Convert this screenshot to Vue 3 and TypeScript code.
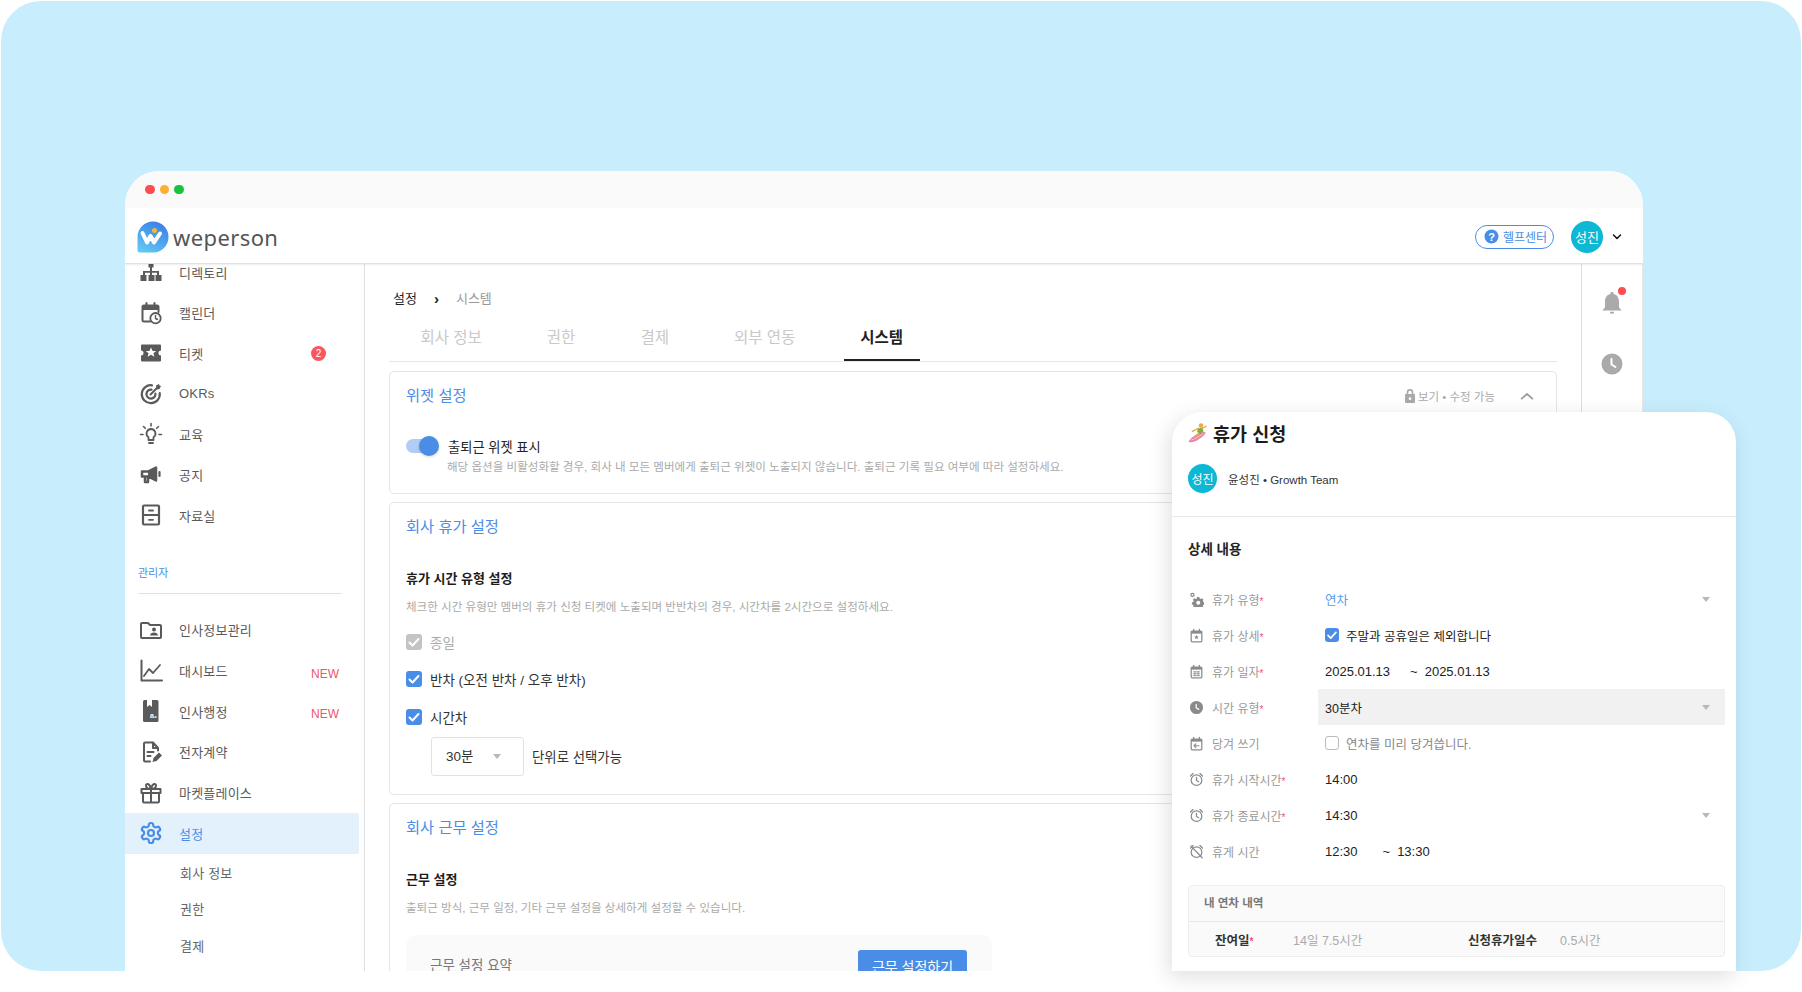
<script setup lang="ts">
import { h } from 'vue'

interface Shape { d: string; fill?: string; stroke?: string; w?: number }
type IconName = string

const s = (d: string, w = 2): Shape => ({ d, stroke: 'currentColor', w })
const f = (d: string, fill = 'currentColor'): Shape => ({ d, fill })

const icons: Record<IconName, Shape[]> = {
  org: [f('M9.500 1h5v6.500h-1.500V11H20v4h2.500v6h-6v-6H18v-2.200h-5V15h2.500v6h-6v-6H11v-2.200H6V15h1.500v6h-6v-6H4v-4h7V7.500H9.500z')],
  cal: [
    s('M11 20.500H5A1.500 1.500 0 0 1 3.500 19V6A1.500 1.500 0 0 1 5 4.500h13A1.500 1.500 0 0 1 19.500 6V11'),
    f('M3.500 4.500h16v4.500h-16z'),
    s('M7.500 2V6M15.500 2V6'),
    s('M16.500 12a5.200 5.200 0 1 0 0 10.400 5.200 5.200 0 0 0 0-10.400z', 1.8),
    s('M16.500 14.500v3l2 1', 1.4),
  ],
  ticket: [
    f('M3 3.500h18a1 1 0 0 1 1 1v5a2.500 2.500 0 0 0 0 5v5a1 1 0 0 1-1 1H3a1 1 0 0 1-1-1v-5a2.500 2.500 0 0 0 0-5v-5a1 1 0 0 1 1-1z'),
    f('M12 6.500l1.600 3.400h3.600l-2.800 2.300 1 3.600-3.400-2-3.400 2 1-3.600-2.800-2.300h3.600z', '#fff'),
  ],
  okr: [
    s('M13 3.300A9 9 0 1 0 20.700 11', 2.2),
    s('M12.500 7.600a4.500 4.500 0 1 0 3.900 3.900', 2.2),
    s('M11.500 12.500L18 6', 2),
    f('M17 3.500l3-1.500.5 1.500L22 4l-1.500 3-3 .5z'),
  ],
  bulb: [
    s('M12 7a4.500 4.500 0 0 0-2.500 8.200V18h5v-2.800A4.500 4.500 0 0 0 12 7z', 1.8),
    s('M10 21h4', 1.8),
    s('M12 1.500V4M4.500 4.500l1.800 1.800M19.500 4.500l-1.800 1.800M1.500 12.500H4M20 12.500h2.500', 1.6),
  ],
  mega: [s('M3 8.500h6l8-4v13l-8-4H3zM6 14v5h3v-5', 2.5), f('M9 8.500l8-4v13l-8-4z'), s('M20.500 9v4', 2.2)],
  cabinet: [s('M5 2.500h14a1 1 0 0 1 1 1v17a1 1 0 0 1-1 1H5a1 1 0 0 1-1-1v-17a1 1 0 0 1 1-1zM4 12h16', 2.2), s('M10 7.500h4M10 16.800h4', 1.8)],
  folder: [
    s('M2 6a1 1 0 0 1 1-1h6l2 2h10a1 1 0 0 1 1 1v11a1 1 0 0 1-1 1H3a1 1 0 0 1-1-1z', 2),
    f('M15 9.500a2 2 0 1 0 0 4 2 2 0 0 0 0-4zM11 17.500c0-2 2-3 4-3s4 1 4 3z'),
  ],
  chart: [s('M2.500 1.500V21.500H23', 2), s('M5 17l5-7 4 4 7-8', 1.8)],
  hr: [f('M5.500 1h2.500v7l2.500-2 2.500 2V1h5a1.500 1.500 0 0 1 1.500 1.500v19a1.500 1.500 0 0 1-1.500 1.500h-12.500a1.500 1.500 0 0 1-1.500-1.500v-19a1.500 1.500 0 0 1 1.500-1.500z')],
  sign: [
    s('M14 2.500H6a1 1 0 0 0-1 1v17a1 1 0 0 0 1 1h5M14 2.500L19 8v2.500M14 2.500V8h5M8.500 12h6M8.500 16h3', 2),
    f('M13.500 22l1-4 5.500-5.500 3 3-5.500 5.500z'),
  ],
  gift: [s('M2.500 8h19v4h-19zM4 12v8.500a1 1 0 0 0 1 1h14a1 1 0 0 0 1-1V12M12 8v13.500M12 8C9 8 7 6.500 7 4.500S10.500 1.500 12 8M12 8c3 0 5-1.500 5-3.500S13.500 1.500 12 8', 2)],
  gear: [
    s('M12.220 2h-.44a2 2 0 0 0-2 2v.18a2 2 0 0 1-1 1.730l-.43.25a2 2 0 0 1-2 0l-.15-.08a2 2 0 0 0-2.730.73l-.22.38a2 2 0 0 0 .73 2.730l.15.1a2 2 0 0 1 1 1.720v.51a2 2 0 0 1-1 1.740l-.15.09a2 2 0 0 0-.73 2.730l.22.38a2 2 0 0 0 2.730.73l.15-.08a2 2 0 0 1 2 0l.43.25a2 2 0 0 1 1 1.730V20a2 2 0 0 0 2 2h.44a2 2 0 0 0 2-2v-.18a2 2 0 0 1 1-1.730l.43-.25a2 2 0 0 1 2 0l.15.08a2 2 0 0 0 2.730-.73l.22-.39a2 2 0 0 0-.73-2.730l-.15-.08a2 2 0 0 1-1-1.740v-.5a2 2 0 0 1 1-1.740l.15-.09a2 2 0 0 0 .73-2.730l-.22-.38a2 2 0 0 0-2.730-.73l-.15.08a2 2 0 0 1-2 0l-.43-.25a2 2 0 0 1-1-1.730V4a2 2 0 0 0-2-2z', 2.2),
    s('M12 9a3 3 0 1 0 0 6 3 3 0 0 0 0-6z', 2.2),
  ],
  gears: [
    f('M5.500 1a3.500 3.500 0 1 0 0 7 3.500 3.500 0 0 0 0-7zm0 2a1.500 1.500 0 1 1 0 3 1.500 1.500 0 0 1 0-3z'),
    f('M13 8h3.500l.5 2.200 1.800.8 2-1.100 2.400 2.400-1.100 1.900.8 1.900 2 .5v3.400l-2 .5-.8 1.900 1.100 1.900-2.400 2.400-2-1.100-1.800.8-.5 1.800H13l-.5-1.800-1.800-.8-2 1.100-2.400-2.400 1.100-1.900-.8-1.900-2-.5v-3.400l2-.5.8-1.900-1.100-1.900 2.400-2.400 2 1.100 1.800-.8zm1.800 5.800a3.200 3.200 0 1 0 0 6.400 3.200 3.200 0 0 0 0-6.400z'),
  ],
  dateStar: [
    s('M5 5h14a1.500 1.500 0 0 1 1.500 1.500v14A1.500 1.500 0 0 1 19 22H5a1.500 1.500 0 0 1-1.500-1.500v-14A1.500 1.500 0 0 1 5 5z', 2),
    f('M3.500 5h17v4h-17z'), s('M7.500 2v4M16.500 2v4', 2),
    f('M12 11l1.200 2.500h2.800l-2.200 1.700.8 2.800-2.600-1.600-2.600 1.600.8-2.800-2.200-1.700h2.800z'),
  ],
  dateGrid: [
    s('M5 5h14a1.500 1.500 0 0 1 1.500 1.500v14A1.500 1.500 0 0 1 19 22H5a1.500 1.500 0 0 1-1.500-1.500v-14A1.500 1.500 0 0 1 5 5z', 2),
    f('M3.500 5h17v4h-17z'), s('M7.500 2v4M16.500 2v4', 2),
    s('M7 12.500h10M7 15.500h10M7 18.500h10M9.500 12v7M14.500 12v7', 1.2),
  ],
  clockFill: [
    f('M12 1.500a10.500 10.500 0 1 0 0 21 10.500 10.500 0 0 0 0-21z'),
    { d: 'M11.500 7v5.500l4 2.500', stroke: '#fff', w: 2 },
  ],
  dateBack: [
    s('M5 5h14a1.500 1.500 0 0 1 1.500 1.500v14A1.500 1.500 0 0 1 19 22H5a1.500 1.500 0 0 1-1.500-1.500v-14A1.500 1.500 0 0 1 5 5z', 2),
    f('M3.500 5h17v4h-17z'), s('M7.500 2v4M16.500 2v4', 2),
    s('M16 15.500H8M11 12.500l-3 3 3 3', 1.8),
  ],
  alarm: [
    s('M12 4.500a8.500 8.500 0 1 0 0 17 8.500 8.500 0 0 0 0-17z', 2),
    s('M12 8.500v5l3.500 2M2.500 6.500L6.500 2.500M21.500 6.500l-4-4', 2),
  ],
  alarmOff: [
    s('M12 4.500a8.500 8.500 0 1 0 0 17 8.500 8.500 0 0 0 0-17z', 2),
    s('M2.500 6.500L6.500 2.500M21.500 6.500l-4-4M3 3l18 19', 2),
  ],
  bell: [f('M12 1.500a1.500 1.500 0 0 1 1.500 1.500v.8c3.500.8 5 3.700 5 7.400v5l2.500 2.800H3l2.500-2.800v-5c0-3.700 1.500-6.600 5-7.400V3A1.500 1.500 0 0 1 12 1.500zM10 20h4a2 2 0 0 1-4 0z')],
  lock: [f('M12 1.500a5 5 0 0 0-5 5V9H5.500a1 1 0 0 0-1 1v11a1.500 1.500 0 0 0 1.500 1.500h12a1.500 1.500 0 0 0 1.500-1.500V10a1 1 0 0 0-1-1H17V6.500a5 5 0 0 0-5-5zm0 2.500a2.500 2.500 0 0 1 2.500 2.500V9h-5V6.500A2.500 2.500 0 0 1 12 4zm0 10a2 2 0 1 1 0 4 2 2 0 0 1 0-4z')],
  chevUp: [s('M4 16l8-7 8 7', 2.6)],
  chevDown: [s('M5 8l7 7 7-7', 3)],
}

const Ico = (props: { name: string; size?: number }) =>
  h(
    'svg',
    { width: props.size ?? 24, height: props.size ?? 24, viewBox: '0 0 24 24', fill: 'none', class: 'ico' },
    icons[props.name].map((p) =>
      h('path', {
        d: p.d,
        fill: p.fill ?? 'none',
        stroke: p.stroke ?? 'none',
        'stroke-width': p.w ?? 0,
        'stroke-linecap': 'round',
        'stroke-linejoin': 'round',
      }),
    ),
  )
Ico.props = ['name', 'size']

const topMenu = [
  { icon: 'org', label: '디렉토리' },
  { icon: 'cal', label: '캘린더' },
  { icon: 'ticket', label: '티켓', badge: '2' },
  { icon: 'okr', label: 'OKRs' },
  { icon: 'bulb', label: '교육' },
  { icon: 'mega', label: '공지' },
  { icon: 'cabinet', label: '자료실' },
]
const adminMenu = [
  { icon: 'folder', label: '인사정보관리' },
  { icon: 'chart', label: '대시보드', tag: 'NEW' },
  { icon: 'hr', label: '인사행정', tag: 'NEW' },
  { icon: 'sign', label: '전자계약' },
  { icon: 'gift', label: '마켓플레이스' },
  { icon: 'gear', label: '설정', active: true },
]
const subMenu = ['회사 정보', '권한', '결제']
const tabs = ['회사 정보', '권한', '결제', '외부 연동', '시스템']
</script>

<template>
  <div class="page">
    <div class="stage">
      <div class="window">
        <div class="titlebar">
          <i class="dot red"></i><i class="dot amber"></i><i class="dot green"></i>
        </div>
        <header class="topbar">
          <div class="brand">
            <svg class="logo" width="32" height="32" viewBox="0 0 32 32">
              <defs>
                <linearGradient id="lg" x1="0.7" y1="0" x2="0.2" y2="1">
                  <stop offset="0" stop-color="#3a7fe6" />
                  <stop offset="1" stop-color="#62c8f6" />
                </linearGradient>
              </defs>
              <path d="M16 0.500a15.500 15.500 0 0 1 0 31H3a2.500 2.500 0 0 1-2.500-2.500V16A15.500 15.500 0 0 1 16 0.500z" fill="url(#lg)" />
              <path d="M5.500 12l4.500 9.500 3.500-6.500 3.500 6.500 6-9" fill="none" stroke="#fff" stroke-width="4" stroke-linejoin="round" stroke-linecap="round" />
              <circle cx="17.500" cy="9.500" r="2.500" fill="#f4b930" />
            </svg>
            <span class="wordmark">weperson</span>
          </div>
          <div class="top-right">
            <a class="help">
              <svg width="15" height="15" viewBox="0 0 15 15"><circle cx="7.500" cy="7.500" r="7" fill="#4a8de6" /><text x="7.500" y="11.500" text-anchor="middle" class="help-q">?</text></svg>
              헬프센터
            </a>
            <span class="avatar big">성진</span>
            <Ico name="chevDown" :size="12" class="chev-black" />
          </div>
        </header>

        <div class="body">
          <aside class="sidebar">
            <nav class="list top-list">
              <div v-for="m in topMenu" :key="m.label" class="item">
                <Ico :name="m.icon" />
                <span class="item-label">{{ m.label }}</span>
                <span v-if="m.badge" class="badge">{{ m.badge }}</span>
              </div>
            </nav>
            <div class="admin-head">관리자</div>
            <div class="admin-rule"></div>
            <nav class="list admin-list">
              <div v-for="m in adminMenu" :key="m.label" class="item" :class="{ active: m.active }">
                <span class="item-icon">
                  <Ico :name="m.icon" />
                  <span v-if="m.icon === 'hr'" class="hr-mark">a₂</span>
                </span>
                <span class="item-label">{{ m.label }}</span>
                <span v-if="m.tag" class="tag">{{ m.tag }}</span>
              </div>
            </nav>
            <div class="sub-list">
              <div v-for="t in subMenu" :key="t" class="subitem">{{ t }}</div>
            </div>
          </aside>

          <main class="main">
            <div class="crumbs"><span>설정</span><b class="crumb-sep">›</b><span class="crumb-now">시스템</span></div>
            <div class="tabs">
              <span v-for="t in tabs" :key="t" class="tab" :class="{ on: t === '시스템' }">{{ t }}</span>
            </div>

            <section class="card c1">
              <div class="card-head">
                <h3>위젯 설정</h3>
                <div class="perm">
                  <Ico name="lock" :size="16" />
                  <span>보기 • 수정 가능</span>
                  <Ico name="chevUp" :size="16" class="perm-chev" />
                </div>
              </div>
              <div class="toggle-row">
                <span class="toggle"><i></i></span>
                <span class="toggle-label">출퇴근 위젯 표시</span>
              </div>
              <p class="desc toggle-desc">해당 옵션을 비활성화할 경우, 회사 내 모든 멤버에게 출퇴근 위젯이 노출되지 않습니다. 출퇴근 기록 필요 여부에 따라 설정하세요.</p>
            </section>

            <section class="card c2">
              <div class="card-head"><h3>회사 휴가 설정</h3></div>
              <h4>휴가 시간 유형 설정</h4>
              <p class="desc">체크한 시간 유형만 멤버의 휴가 신청 티켓에 노출되며 반반차의 경우, 시간차를 2시간으로 설정하세요.</p>
              <label class="check disabled first"><span class="box"><svg viewBox="0 0 16 16"><path d="M3.500 8.500l3 3 6-6.500" /></svg></span>종일</label>
              <label class="check"><span class="box"><svg viewBox="0 0 16 16"><path d="M3.500 8.500l3 3 6-6.500" /></svg></span>반차 (오전 반차 / 오후 반차)</label>
              <label class="check"><span class="box"><svg viewBox="0 0 16 16"><path d="M3.500 8.500l3 3 6-6.500" /></svg></span>시간차</label>
              <div class="unit-row">
                <span class="select">30분<i class="caret"></i></span>
                <span>단위로 선택가능</span>
              </div>
            </section>

            <section class="card c3">
              <div class="card-head"><h3>회사 근무 설정</h3></div>
              <h4>근무 설정</h4>
              <p class="desc">출퇴근 방식, 근무 일정, 기타 근무 설정을 상세하게 설정할 수 있습니다.</p>
              <div class="summary">
                <span>근무 설정 요약</span>
                <button class="primary">근무 설정하기</button>
              </div>
            </section>
          </main>

          <aside class="rail">
            <span class="bell"><Ico name="bell" :size="26" /><i></i></span>
            <Ico name="clockFill" :size="24" class="rail-clock" />
          </aside>
        </div>
      </div>
    </div>

    <div class="popup">
      <div class="pop-head">
        <div class="pop-title">
          <svg width="20" height="20" viewBox="0 0 20 20">
            <path d="M0.500 19c3.500 1 10-1 16-7.500 1.200-1.300 1.500-2.500 0-2.500C11 9 2.500 14 0.500 19z" fill="#ea7fb0" />
            <path d="M3 17c3-.5 8-3 12-6.500" fill="none" stroke="#f6c4da" stroke-width="1" />
            <circle cx="13" cy="2.500" r="2.200" fill="#e9a84a" />
            <path d="M10 5.500l4.500-1 1 4-3 2.500-3.500-2z" fill="#7ab33c" />
            <path d="M3.500 8l7-3.500.6 1.300-6.800 3.400zM14 4.500l4.500-2 .5 1-4.500 2.500zM10 10l-4 3.500 1.300 1.300 5.200-3.800z" fill="#e9a84a" />
          </svg>
          <span>휴가 신청</span>
        </div>
        <div class="pop-user">
          <span class="avatar mid">성진</span>
          <span>윤성진 • Growth Team</span>
        </div>
      </div>
      <div class="pop-body">
        <h5>상세 내용</h5>
        <div class="row"><Ico name="gears" :size="15" class="ri" /><span class="rl">휴가 유형<em>*</em></span><span class="rv link">연차<i class="caret"></i></span></div>
        <div class="row"><Ico name="dateStar" :size="15" class="ri" /><span class="rl">휴가 상세<em>*</em></span><span class="rv"><span class="box small"><svg viewBox="0 0 16 16"><path d="M3.500 8.500l3 3 6-6.500" /></svg></span>주말과 공휴일은 제외합니다</span></div>
        <div class="row"><Ico name="dateGrid" :size="15" class="ri" /><span class="rl">휴가 일자<em>*</em></span><span class="rv num">2025.01.13<span class="til">~</span>2025.01.13</span></div>
        <div class="row"><Ico name="clockFill" :size="15" class="ri" /><span class="rl">시간 유형<em>*</em></span><span class="rv band">30분차<i class="caret"></i></span></div>
        <div class="row"><Ico name="dateBack" :size="15" class="ri" /><span class="rl">당겨 쓰기</span><span class="rv muted"><span class="box small empty"></span>연차를 미리 당겨씁니다.</span></div>
        <div class="row"><Ico name="alarm" :size="15" class="ri" /><span class="rl">휴가 시작시간<em>*</em></span><span class="rv num">14:00</span></div>
        <div class="row"><Ico name="alarm" :size="15" class="ri" /><span class="rl">휴가 종료시간<em>*</em></span><span class="rv num">14:30<i class="caret"></i></span></div>
        <div class="row"><Ico name="alarmOff" :size="15" class="ri" /><span class="rl">휴게 시간</span><span class="rv num">12:30<span class="til short">~</span>13:30</span></div>
        <div class="ledger">
          <div class="ledger-head">내 연차 내역</div>
          <div class="ledger-row">
            <span class="lk first">잔여일<em>*</em></span>
            <span class="lv wide">14일 7.5시간</span>
            <span class="lk">신청휴가일수</span>
            <span class="lv">0.5시간</span>
          </div>
        </div>
      </div>
    </div>
  </div>
</template>

<style>
html, body { margin: 0; background: #fff; }
</style>

<style scoped>
.page {
  position: relative;
  width: 1802px;
  height: 992px;
  overflow: hidden;
  background: #fff;
  font-family: "Liberation Sans", "Noto Sans CJK KR", sans-serif;
  color: #222;
}
.stage {
  margin: 1px 1px 0;
  height: 970px;
  box-sizing: border-box;
  padding: 170px 158px 0 124px;
  background: #c8eefd;
  border-radius: 40px;
  overflow: hidden;
}
.window {
  height: 800px;
  background: #fff;
  border-radius: 34px 34px 0 0;
  overflow: hidden;
  display: flex;
  flex-direction: column;
}
.titlebar {
  flex: none;
  height: 37px;
  background: #fafafa;
  display: flex;
  align-items: center;
  gap: 5px;
  padding-left: 20px;
  box-sizing: border-box;
}
.dot { width: 9.500px; height: 9.500px; border-radius: 50%; }
.red { background: #fc4d50; }
.amber { background: #fdb02e; }
.green { background: #17c23c; }
.topbar {
  flex: none;
  height: 56px;
  box-sizing: border-box;
  display: flex;
  align-items: center;
  justify-content: space-between;
  padding: 2px 20px 0 12px;
  border-bottom: 1px solid #e2e2e2;
  box-shadow: 0 1px 2px rgba(0, 0, 0, 0.08);
  position: relative;
  z-index: 2;
  background: #fff;
}
.brand { display: flex; align-items: center; gap: 4px; }
.wordmark {
  font-family: "Noto Sans", sans-serif;
  font-size: 22px;
  line-height: 30px;
  color: #555;
  letter-spacing: 0.4px;
  margin-top: 1px;
}
.top-right { display: flex; align-items: center; }
.help {
  display: flex;
  align-items: center;
  gap: 4px;
  height: 24px;
  box-sizing: border-box;
  width: 79px;
  padding-left: 8px;
  border: 1px solid #4a8de6;
  border-radius: 12px;
  font-size: 12px;
  color: #4a8de6;
}
.help-q { font-size: 11px; font-weight: 700; fill: #fff; font-family: "Liberation Sans", sans-serif; }
.avatar {
  display: inline-flex;
  align-items: center;
  justify-content: center;
  border-radius: 50%;
  background: #0cb8d4;
  color: #fff;
  flex: none;
}
.avatar.big { width: 32px; height: 32px; font-size: 13px; margin-left: 17px; }
.avatar.mid { width: 29px; height: 29px; font-size: 12px; }
.chev-black { color: #111; margin-left: 8px; }
.body { flex: 1; min-height: 0; display: flex; }

.sidebar {
  flex: none;
  width: 239px;
  box-sizing: content-box;
  border-right: 1px solid #dfdfdf;
  overflow: hidden;
}
.top-list { margin-top: -12px; }
.item {
  height: 40.500px;
  display: flex;
  align-items: center;
  padding: 0 20px 0 14px;
  width: 234px;
  box-sizing: border-box;
  color: #5a5a5a;
  font-size: 13px;
}
.admin-list .item { height: 40.700px; }
.item.active {
  background: #e2f1fc;
  color: #4a8de6;
  border-radius: 0 2px 2px 0;
}
.item-icon { position: relative; display: flex; }
.hr-mark {
  position: absolute;
  right: 6px;
  bottom: 3px;
  font-size: 7px;
  font-weight: 700;
  line-height: 8px;
  color: #fff;
}
.item-label { margin-left: 16px; flex: 1; letter-spacing: 0.2px; }
.ico { display: block; flex: none; }
.badge {
  width: 15px;
  height: 15px;
  border-radius: 50%;
  background: #fb5660;
  color: #fff;
  font-size: 10px;
  line-height: 15px;
  text-align: center;
  margin-right: 13px;
}
.tag { font-size: 12px; color: #f0546a; margin-top: 6px; }
.admin-head {
  margin: 29px 0 0 13px;
  font-size: 11px;
  line-height: 16px;
  color: #4a8de6;
}
.admin-rule { margin: 12px 22px 0 13px; height: 1px; background: #e2e2e2; }
.admin-list { margin-top: 16px; }
.sub-list { padding-top: 2px; }
.subitem {
  height: 36.500px;
  line-height: 36.500px;
  padding-left: 55px;
  font-size: 13px;
  letter-spacing: 0.2px;
  color: #666;
}

.main {
  flex: 1;
  min-width: 0;
  box-sizing: border-box;
  padding: 0 24px;
  overflow: hidden;
}
.crumbs {
  height: 20px;
  margin-top: 25px;
  padding-left: 4px;
  display: flex;
  align-items: center;
  font-size: 13px;
  line-height: 20px;
  color: #222;
}
.crumb-sep { width: 39px; text-align: center; font-size: 15px; font-weight: 700; line-height: 18px; }
.crumb-now { color: #999; }
.tabs {
  height: 43px;
  margin-top: 9px;
  display: flex;
  gap: 32px;
  padding-left: 15px;
  border-bottom: 1px solid #e8e8e8;
  box-sizing: content-box;
}
.tab {
  padding: 5px 16.500px 0;
  height: 43px;
  box-sizing: border-box;
  font-size: 15.500px;
  line-height: 30px;
  color: #c9c9c9;
}
.tab.on {
  color: #222;
  font-weight: 700;
  border-bottom: 2px solid #222;
}
.card {
  border: 1px solid #e5e5e5;
  border-radius: 5px;
  box-sizing: border-box;
  padding: 14px 16px 0;
  margin-bottom: 8px;
}
.c1 { margin-top: 9px; height: 123px; }
.c2 { height: 293px; }
.c3 { height: 300px; }
.card-head { display: flex; justify-content: space-between; align-items: center; height: 20px; }
h3 { margin: 0; font-size: 15.300px; font-weight: 400; line-height: 20px; color: #4a8de6; }
.perm { display: flex; align-items: center; color: #aaa; font-size: 11.500px; }
.perm-chev { margin: 0 5px 0 24px; color: #999; }
.toggle-row { display: flex; align-items: center; height: 22px; margin-top: 29px; }
.toggle {
  position: relative;
  width: 32px;
  height: 14px;
  border-radius: 7px;
  background: #b0cdf5;
  flex: none;
}
.toggle i {
  position: absolute;
  right: -1px;
  top: -3px;
  width: 20px;
  height: 20px;
  border-radius: 50%;
  background: #4a8de6;
  box-shadow: 0 1px 3px rgba(0, 0, 0, 0.18);
}
.toggle-label { margin-left: 10px; font-size: 13.250px; }
.desc { margin: 0; font-size: 11.550px; line-height: 16px; color: #aaa; white-space: nowrap; }
.toggle-desc { margin: 2px 0 0 41px; }
h4 { margin: 31.500px 0 0; font-size: 13px; font-weight: 700; line-height: 20px; color: #1c1c1c; }
.c2 .desc, .c3 .desc { margin-top: 10px; }
.check {
  display: flex;
  align-items: center;
  gap: 8px;
  height: 20px;
  margin-top: 17.500px;
  font-size: 13.500px;
  color: #333;
}
.check.first { margin-top: 17px; }
.check.disabled { color: #aaa; }
.check.disabled .box { background: #c4c4c4; }
.box {
  display: inline-flex;
  width: 16px;
  height: 16px;
  border-radius: 3px;
  background: #4a8de6;
  flex: none;
}
.box.small { width: 14px; height: 14px; margin-right: 7px; }
.box.empty { background: #fff; border: 1px solid #bbb; box-sizing: border-box; }
.box svg { width: 100%; height: 100%; fill: none; stroke: #fff; stroke-width: 2; stroke-linecap: round; stroke-linejoin: round; }
.unit-row { display: flex; align-items: center; gap: 8px; margin: 10px 0 0 25px; font-size: 13.400px; color: #333; }
.select {
  position: relative;
  width: 93px;
  height: 39px;
  box-sizing: border-box;
  border: 1px solid #e2e2e2;
  border-radius: 3px;
  padding-left: 14px;
  line-height: 37px;
}
.caret {
  position: absolute;
  top: 50%;
  margin-top: -2px;
  right: 0;
  width: 0;
  height: 0;
  border-left: 4.500px solid transparent;
  border-right: 4.500px solid transparent;
  border-top: 5px solid #b8b8b8;
}
.select .caret { right: 22px; }
.summary {
  margin-top: 19px;
  width: 586px;
  height: 100px;
  box-sizing: border-box;
  background: #fafafa;
  border-radius: 10px;
  padding: 15px 25px 0 24px;
  display: flex;
  justify-content: space-between;
  align-items: flex-start;
  font-size: 13.500px;
  color: #777;
}
.summary span { line-height: 32px; }
.primary {
  width: 109px;
  height: 40px;
  border: 0;
  border-radius: 3px;
  background: #4a8de6;
  color: #fff;
  font: inherit;
  font-size: 14px;
  padding: 0 0 8px;
}
.rail {
  flex: none;
  width: 62px;
  border-left: 1px solid #dfdfdf;
  border-right: 1px solid #e8e8e8;
  box-sizing: border-box;
  color: #aaa;
  display: flex;
  flex-direction: column;
  align-items: center;
  padding-top: 26px;
}
.bell { position: relative; display: block; }
.bell i {
  position: absolute;
  top: -3px;
  right: -1px;
  width: 8px;
  height: 8px;
  border-radius: 50%;
  background: #fc4d50;
}
.rail-clock { margin-top: 36px; }

.popup {
  position: absolute;
  left: 1172px;
  top: 412px;
  width: 564px;
  height: 559px;
  background: #fff;
  border-radius: 30px 30px 0 0;
  box-shadow: -3px 6px 22px rgba(0, 0, 0, 0.13);
}
.pop-head { height: 105px; box-sizing: border-box; padding: 8px 16px 0; border-bottom: 1px solid #e8e8e8; }
.pop-title { display: flex; align-items: center; gap: 5px; height: 26px; font-size: 18.500px; font-weight: 700; color: #1c1c1c; }
.pop-user { display: flex; align-items: center; gap: 11px; margin-top: 18px; font-size: 11.500px; color: #333; }
.pop-body { padding: 24px 11px 0 16px; }
h5 { margin: 0 0 22px; font-size: 13.500px; font-weight: 700; line-height: 18px; color: #222; }
.row { display: flex; align-items: center; height: 36px; color: #8a8a8a; }
.ri { margin: 0 8px 0 1px; color: #8a8a8a; }
.rl { width: 106px; font-size: 12px; color: #999; white-space: nowrap; }
em { color: #f0546a; font-style: normal; font-size: 10px; }
.rv {
  position: relative;
  flex: 1;
  height: 36px;
  display: flex;
  align-items: center;
  padding-left: 7px;
  font-size: 12.500px;
  color: #222;
}
.rv.num { font-size: 13px; }
.rv .caret { right: 15px; }
.rv.link { color: #5a9bee; }
.rv.muted { color: #888; }
.rv.band { background: #f1f1f1; }
.til { margin: 0 7px 0 20px; }
.til.short { margin-left: 25px; }
.ledger {
  margin-top: 16px;
  height: 72px;
  box-sizing: border-box;
  border: 1px solid #eee;
  border-radius: 4px;
  background: #fafafa;
}
.ledger-head {
  height: 35px;
  line-height: 35px;
  padding-left: 15px;
  font-size: 11.500px;
  font-weight: 700;
  color: #777;
  border-bottom: 1px solid #e8e8e8;
}
.ledger-row { display: flex; align-items: center; height: 35px; font-size: 12.500px; }
.lk { font-weight: 700; color: #333; }
.lk.first { margin-left: 26px; width: 78px; }
.lv { color: #aaa; margin-left: 23px; }
.lv.wide { width: 175px; margin-left: 0; }
</style>
